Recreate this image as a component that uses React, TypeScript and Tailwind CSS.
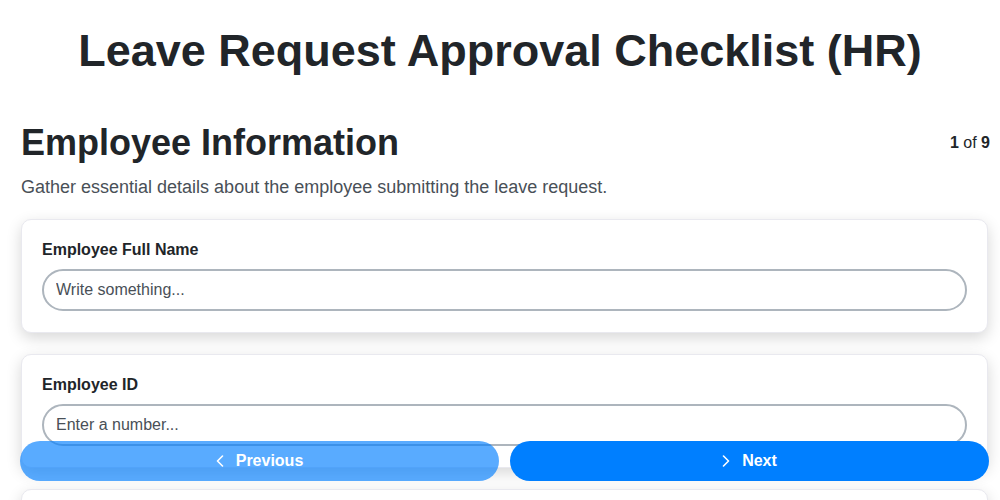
import React from 'react';

const Chevron = ({ dir }: { dir: 'left' | 'right' }) => (
  <svg width="8" height="12" viewBox="0 0 8 12" fill="none" stroke="currentColor" strokeWidth="1.6" strokeLinecap="round" strokeLinejoin="round">
    {dir === 'left' ? <path d="M6.5 1 L1.5 6 L6.5 11" /> : <path d="M1.5 1 L6.5 6 L1.5 11" />}
  </svg>
);

export default function App() {
  const fields = [
    { label: 'Employee Full Name', placeholder: 'Write something...' },
    { label: 'Employee ID', placeholder: 'Enter a number...' },
    { label: 'Department', placeholder: 'Write something...' },
  ];

  return (
    <div className="min-h-screen bg-white text-[#212529] font-['Liberation_Sans',Arial,sans-serif]">
      {/* Header */}
      <h1 className="pt-[24px] text-center text-[45px] font-bold leading-[53px]">
        Leave Request Approval Checklist (HR)
      </h1>

      <main className="pl-[21px] pr-[10px] pt-[44px] pb-32">
        <div className="flex items-center justify-between">
          <h2 className="text-[36px] font-bold leading-[43px]">Employee Information</h2>
          <span className="text-[16px]">
            <b>1</b> of <b>9</b>
          </span>
        </div>
        <p className="mt-[12px] text-[18px] leading-[22px] text-[#495057]">
          Gather essential details about the employee submitting the leave request.
        </p>

        <div className="mt-[21px] mr-[2px] flex flex-col gap-[21px]">
          {fields.map((f) => (
            <div
              key={f.label}
              className="rounded-[10px] border border-[#e9e9ef] bg-white px-[20px] pt-[20px] pb-[21px] shadow-[0_5px_15px_rgba(0,0,0,0.16)]"
            >
              <label className="block text-[16px] font-bold leading-[19px]">{f.label}</label>
              <input
                className="mt-[10px] h-[42px] w-full rounded-full border-2 border-[#adb5bd] bg-white px-[12px] text-[16px] text-[#212529] outline-none placeholder:text-[#495057]"
                placeholder={f.placeholder}
              />
            </div>
          ))}
        </div>
      </main>

      {/* Navigation */}
      <div className="fixed bottom-[19px] left-[20px] right-[11px] flex gap-[11px]">
        <button
          disabled
          className="flex h-[40px] flex-1 items-center justify-center gap-[12px] rounded-full bg-[#007fff] text-[16px] font-bold text-white opacity-65"
        >
          <Chevron dir="left" />
          Previous
        </button>
        <button className="flex h-[40px] flex-1 items-center justify-center gap-[12px] rounded-full bg-[#007fff] text-[16px] font-bold text-white">
          <Chevron dir="right" />
          Next
        </button>
      </div>
    </div>
  );
}
